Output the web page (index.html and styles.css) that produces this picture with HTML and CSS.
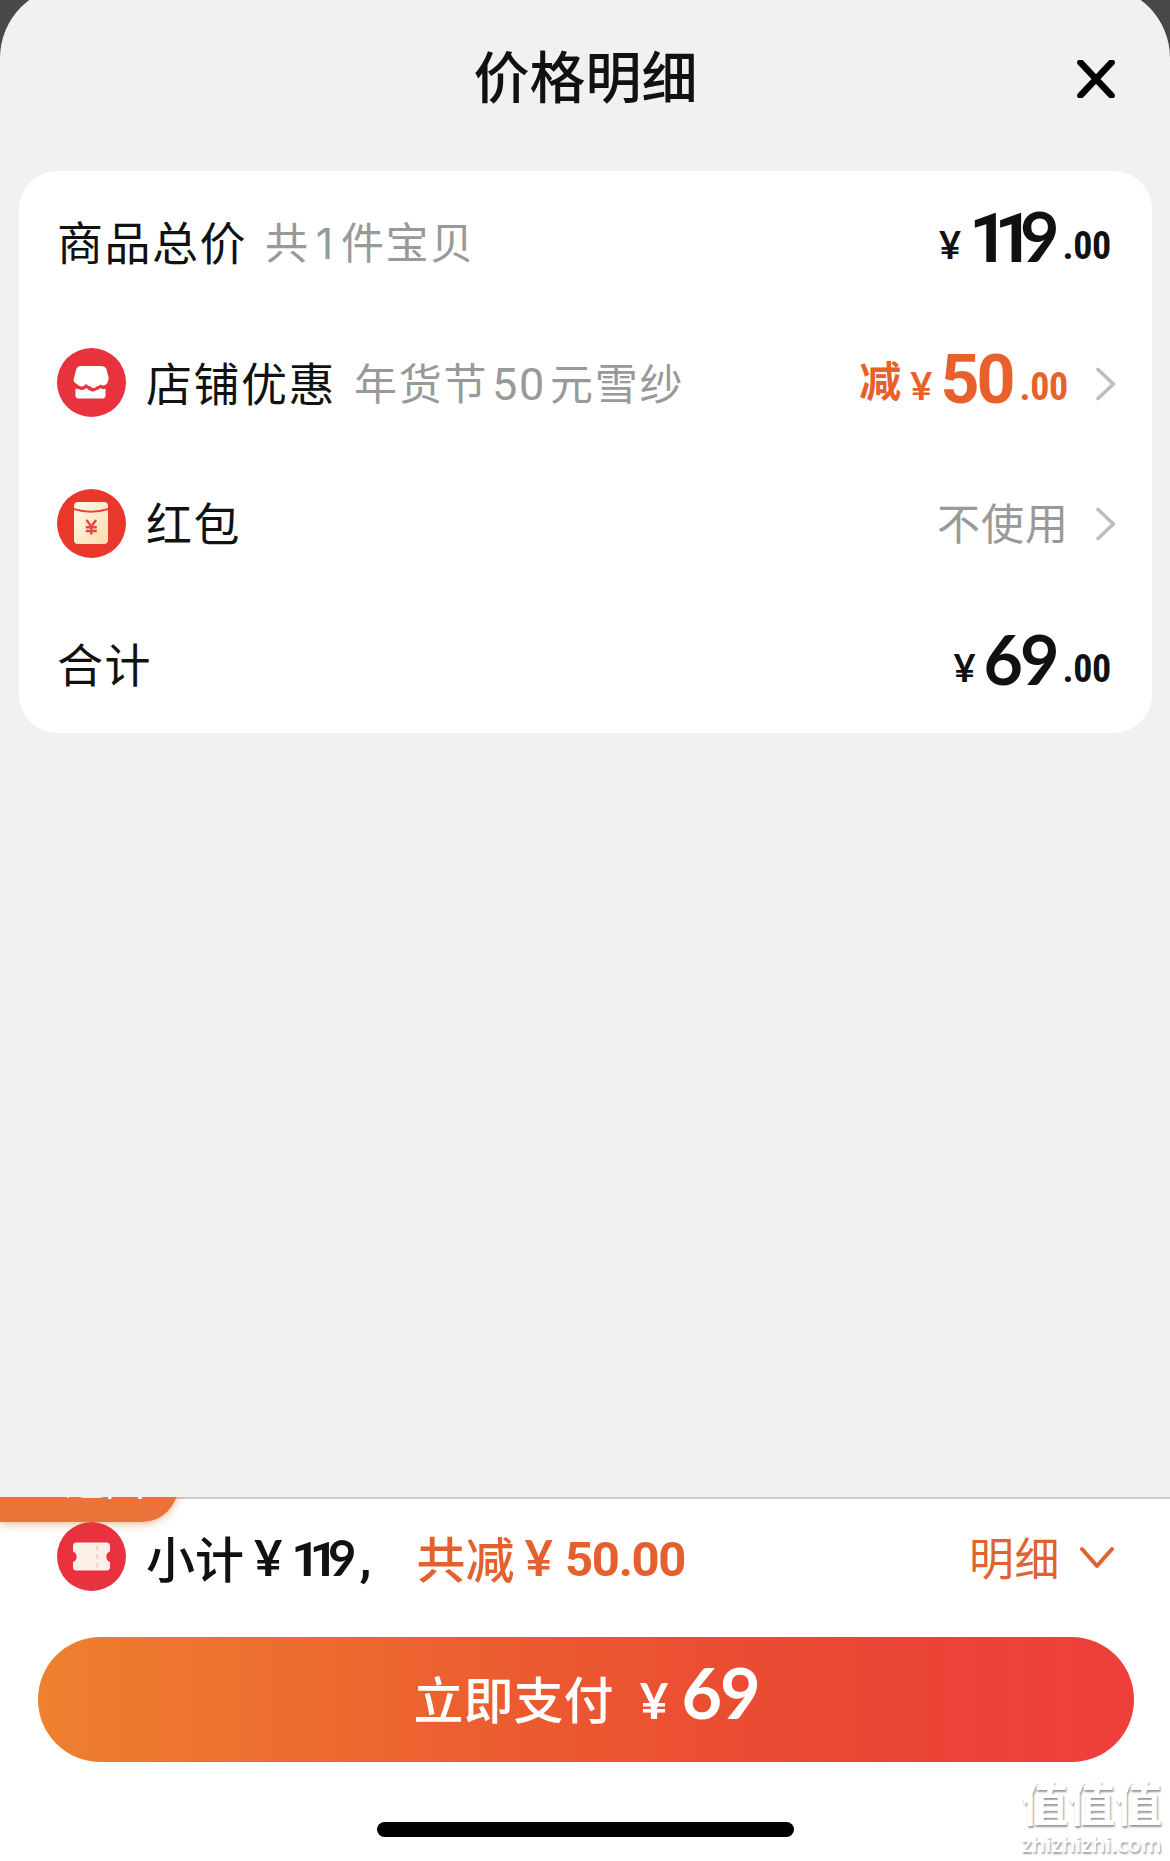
FILE: index.html
```html
<!DOCTYPE html>
<html lang="zh-CN">
<head>
  <meta charset="UTF-8">
  <meta name="viewport" content="width=device-width, initial-scale=1.0">
  <title>价格明细</title>
  <link rel="stylesheet" href="styles.css">
</head>
<body>
  <div class="sheet">
    <header class="sheet-header">
      <h1>价格明细</h1>
      <button class="close-btn" aria-label="关闭">
        <svg width="38" height="38" viewBox="0 0 38 38">
          <path d="M3.5 2.5L34.5 35.5M34.5 2.5L3.5 35.5" fill="none" stroke="#000" stroke-width="6.6" stroke-linecap="round"/>
        </svg>
      </button>
    </header>

    <div class="card">
      <div class="row">
        <span class="label">商品总价</span>
        <span class="desc">共<span class="one">1</span>件宝贝</span>
        <div class="price">
          <span class="yen">¥</span><span class="amount round"><span class="ones">11</span>9</span><span class="cents">.00</span>
        </div>
      </div>

      <div class="row">
        <svg class="icon" viewBox="0 0 69 69">
          <circle cx="34.5" cy="34.5" r="34.5" fill="#e8333f"/>
          <path d="M23.5 18H44.5Q48 18 49.2 20.5L51.5 29Q52 34 49 36.5Q46 38.5 43.5 36.5Q41.5 38.5 39.5 38.5Q36.5 42 33.5 38.5Q31 38 29 36Q26.5 39 24 38.5Q21 37.5 20 36Q15.5 34.5 17.2 29L19.5 20.5Q20.5 18 23.5 18Z" fill="#fff"/>
          <path d="M18.5 40.5Q21 40.5 24 42Q27 42.5 29.5 40Q31 41.5 33 42.5Q36 44.5 39 42.2Q41.5 41.8 43.5 40Q46 42 48.5 40.5V47.5Q48.5 50.5 45.5 50.5H21.5Q18.5 50.5 18.5 47.5Z" fill="#fff"/>
        </svg>
        <span class="label">店铺优惠</span>
        <span class="desc">年货节<span class="fifty">50</span>元雪纱</span>
        <div class="price off">
          <span class="minus">减</span><span class="yen">¥</span><span class="amount">50</span><span class="cents">.00</span>
        </div>
        <svg class="arrow" width="20" height="34" viewBox="0 0 20 34">
          <path d="M2 2.5L17.5 17L2 31.5" fill="none" stroke="#bdbdbd" stroke-width="3.6" stroke-linecap="round" stroke-linejoin="round"/>
        </svg>
      </div>

      <div class="row">
        <svg class="icon" viewBox="0 0 69 69">
          <defs>
            <linearGradient id="packet" x1="0" y1="0" x2="1" y2="1">
              <stop offset="0" stop-color="#fffaf0"/>
              <stop offset="1" stop-color="#fbdcaa"/>
            </linearGradient>
          </defs>
          <circle cx="34.5" cy="34.5" r="34.5" fill="#e8382b"/>
          <rect x="17" y="13" width="34" height="42" rx="4" fill="url(#packet)"/>
          <path d="M17 20Q34 25.5 51 20" fill="none" stroke="#e5473a" stroke-width="2"/>
          <path d="M29.5 31L34.3 37.5L39 31M34.3 37V45.5M28.8 38.2H39.8M28.8 42H39.8" fill="none" stroke="#e34a3c" stroke-width="2.4"/>
        </svg>
        <span class="label">红包</span>
        <span class="state">不使用</span>
        <svg class="arrow" width="20" height="34" viewBox="0 0 20 34">
          <path d="M2 2.5L17.5 17L2 31.5" fill="none" stroke="#bdbdbd" stroke-width="3.6" stroke-linecap="round" stroke-linejoin="round"/>
        </svg>
      </div>

      <div class="row">
        <span class="label">合计</span>
        <div class="price">
          <span class="yen">¥</span><span class="amount round">69</span><span class="cents">.00</span>
        </div>
      </div>
    </div>
  </div>

  <footer class="pay-bar">
    <div class="back-tag">返回</div>

    <div class="summary">
      <svg class="icon" viewBox="0 0 69 69">
        <circle cx="34.5" cy="34.5" r="34.5" fill="#e8333f"/>
        <path d="M19.5 20.5H49.5Q53 20.5 53 24V29.5A5.6 5.6 0 0 0 53 40V45Q53 48.5 49.5 48.5H19.5Q16 48.5 16 45V40A5.6 5.6 0 0 0 16 29.5V24Q16 20.5 19.5 20.5Z" fill="#fcf0e9"/>
        <path d="M40 23.5V46" stroke="#f3d5cc" stroke-width="2.6" stroke-dasharray="5 3.5"/>
      </svg>
      <div class="subtotal">
        <span>小计</span><span class="num yuan">¥</span><span class="num total"><span class="ones">11</span>9</span><span class="num comma">,</span>
      </div>
      <div class="saved">
        <span>共减</span><span class="num yuan">¥</span><span class="num sum">50.00</span>
      </div>
      <div class="detail">
        <span>明细</span>
        <svg width="34" height="24" viewBox="0 0 34 24">
          <path d="M2 3L17 20L32 3" fill="none" stroke="#df6330" stroke-width="4" stroke-linecap="round" stroke-linejoin="round"/>
        </svg>
      </div>
    </div>

    <button class="pay-btn">
      <span class="pay-text">立即支付</span><span class="pay-yen">¥</span><span class="pay-num">69</span>
    </button>

    <div class="home-indicator"></div>

    <div class="watermark">
      <div class="mark-name">值值值</div>
      <div class="mark-site">zhizhizhi.com</div>
    </div>
  </footer>
</body>
</html>
```
FILE: styles.css
```css
* {
  margin: 0;
  padding: 0;
  box-sizing: border-box;
}

body {
  width: 1170px;
  height: 1861px;
  display: flex;
  flex-direction: column;
  overflow: hidden;
  background-color: #484848;
  color: #111;
  font-family: "Noto Sans CJK SC", sans-serif;
}

button {
  border: none;
  background: none;
  font-family: inherit;
}

/* the sheet's top edge runs a little above the screen */
.sheet {
  flex: none;
  height: 1511px;
  margin-top: -14px;
  padding: 0 18px 0 19px;
  background-color: #f1f1f1;
  border-radius: 72px 72px 0 0;
}

.sheet-header {
  position: relative;
  height: 185px;
  padding-top: 48px;
  text-align: center;
}

.sheet-header h1 {
  font-size: 56px;
  font-weight: 500;
  line-height: 80px;
}

.close-btn {
  position: absolute;
  top: 74px;
  right: 37px;
  width: 38px;
  height: 38px;
}

.close-btn svg {
  display: block;
}

.card {
  height: 562px;
  padding: 1px 36px 0 38px;
  background-color: #fff;
  border-radius: 38px;
}

.row {
  display: flex;
  align-items: center;
  height: 140.5px;
}

.icon {
  flex: none;
  width: 69px;
  height: 69px;
  margin-right: 20px;
}

.label {
  padding-bottom: 4px;
  font-size: 46px;
  letter-spacing: 1.5px;
}

.desc {
  margin-left: 18px;
  padding-bottom: 4px;
  color: #999;
  font-size: 43px;
  letter-spacing: 1.7px;
}

.one {
  margin: 0 6px;
  font-family: Inter, sans-serif;
}

.fifty {
  margin: 0 4px;
  font-family: Roboto, sans-serif;
  font-size: 45px;
}

.price {
  display: flex;
  align-items: baseline;
  margin-left: auto;
  padding-right: 5px;
  padding-bottom: 11px;
  font-family: Roboto, sans-serif;
  font-weight: 700;
}

.yen,
.cents {
  position: relative;
  top: -3px;
  font-size: 38px;
}

.yen {
  font-family: Lato, sans-serif;
}

.cents {
  font-stretch: 85%;
  letter-spacing: -0.3px;
}

.amount {
  margin: 0 7px 0 8px;
  font-size: 68px;
  letter-spacing: -3px;
}

.round {
  margin-right: 6px;
  font-family: Lato, sans-serif;
}

.ones {
  font-family: Roboto, sans-serif;
  letter-spacing: -0.2em;
}

.off {
  padding-right: 1px;
  padding-bottom: 5px;
  color: #e8602c;
}

.minus {
  position: relative;
  top: -6px;
  margin-right: 9px;
  font-family: "Noto Sans CJK SC", sans-serif;
  font-size: 42px;
  line-height: 50px;
}

.arrow {
  flex: none;
  margin-left: 27px;
  margin-top: 2px;
}

.state {
  margin-left: auto;
  padding-bottom: 4px;
  color: #999;
  font-size: 43px;
  letter-spacing: 1px;
}

/* bottom bar */
.pay-bar {
  position: relative;
  height: 364px;
  overflow: hidden;
  background-color: #fff;
  box-shadow: inset 0 2px 0 #ccc;
}

.back-tag {
  position: absolute;
  top: -48px;
  left: 0;
  width: 178px;
  height: 73px;
  padding-left: 65px;
  border-radius: 0 0 36px 0;
  background-color: #eb7239;
  box-shadow: 0 2px 8px rgba(235, 114, 57, 0.5);
  color: #fff;
  font-size: 40px;
  line-height: 59px;
}

.summary {
  position: relative;
  display: flex;
  align-items: center;
  height: 118px;
  padding: 0 56px 0 57px;
  font-size: 49px;
  font-weight: 500;
}

.subtotal,
.saved {
  display: flex;
  align-items: baseline;
}

.num {
  position: relative;
  top: -2px;
  font-family: Roboto, sans-serif;
  font-size: 49px;
  font-weight: 700;
}

.num.yuan {
  margin: 0 9px 0 10px;
  font-family: Lato, sans-serif;
}

.num.total {
  font-family: Lato, sans-serif;
}

.comma {
  margin-left: 3px;
}

.sum {
  letter-spacing: -1.3px;
}

.saved {
  margin-left: 45px;
  color: #e2612f;
}

.num.yuan + .sum {
  margin-left: 3px;
}

.detail {
  display: flex;
  align-items: center;
  gap: 20px;
  margin-left: auto;
  padding-top: 4px;
  color: #df6330;
  font-size: 45px;
  font-weight: 400;
}

.detail span {
  padding-bottom: 3px;
  letter-spacing: 0.5px;
}

.pay-btn {
  display: flex;
  justify-content: center;
  align-items: baseline;
  width: 1096px;
  height: 125px;
  margin: 22px 0 0 38px;
  border-radius: 63px;
  background: linear-gradient(90deg, #ee802f 0%, #eb5630 50%, #e94435 78%, #ee3f3b 100%);
  color: #fff;
  font-size: 50px;
  font-weight: 500;
  line-height: 111px;
}

.pay-yen {
  margin: 0 13px 0 26px;
  font-family: Lato, sans-serif;
  font-weight: 700;
}

.pay-num {
  font-family: Lato, sans-serif;
  font-size: 70px;
  font-weight: 700;
  letter-spacing: -2px;
}

.home-indicator {
  width: 417px;
  height: 15px;
  margin: 60px auto 0;
  border-radius: 8px;
  background-color: #000;
}

.watermark {
  position: absolute;
  right: 8px;
  bottom: 2px;
  color: #fff;
  text-align: center;
  text-shadow: 1px 2px 2px #999;
}

.mark-name {
  font-size: 47px;
  font-weight: 700;
  line-height: 56px;
}

.mark-site {
  font-family: "Open Sans", sans-serif;
  font-size: 21.5px;
  font-weight: 600;
  line-height: 30px;
}
```
